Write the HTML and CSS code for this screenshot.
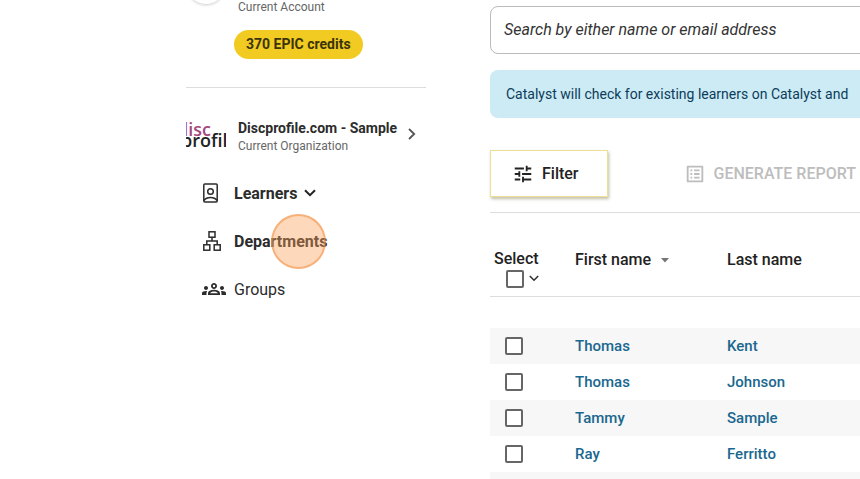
FILE: index.html
```html
<!DOCTYPE html>
<html lang="en">
  <head>
    <meta charset="utf-8" />
    <title>Learners</title>
    <meta name="viewport" content="width=device-width, initial-scale=1" />
    <link rel="stylesheet" href="styles.css">
  </head>
  <body>
    <aside class="sidebar">
      <div class="account">
        <div class="avatar"></div>
        <div class="caption">Current Account</div>
      </div>
      <div class="credits">370 EPIC credits</div>

      <a class="organization" href="#">
        <span class="logo"><span class="logo-top">disc</span><span class="logo-bottom">profile</span></span>
        <span class="org-text">
          <span class="org-name">Discprofile.com - Sample</span>
          <span class="caption">Current Organization</span>
        </span>
        <svg class="org-arrow" width="8" height="12" viewBox="0 0 8 12"><path d="M1 1l5.200 5L1 11" fill="none" stroke="#555" stroke-width="1.800" /></svg>
      </a>

      <nav class="menu">
        <a class="menu-item bold" href="#">
          <svg width="24" height="24" viewBox="0 0 24 24" fill="none" stroke="#2c2c2c" stroke-width="1.500">
            <rect x="2.800" y="3" width="13.400" height="18" rx="1" />
            <circle cx="9.500" cy="10.500" r="2.800" />
            <path d="M3 19.500c1.500-2.200 3.800-3 6.500-3s5 .8 6.500 3" />
          </svg>
          <span>Learners</span>
          <svg class="chevron" width="12" height="8" viewBox="0 0 12 8"><path d="M1 1.200l5 5 5-5" fill="none" stroke="#222" stroke-width="2" /></svg>
        </a>
        <a class="menu-item bold" href="#">
          <svg width="24" height="24" viewBox="0 0 24 24" fill="none" stroke="#2c2c2c" stroke-width="1.500">
            <rect x="8" y="2.800" width="6" height="5.400" />
            <rect x="2.800" y="15.800" width="6" height="5.400" />
            <rect x="13.200" y="15.800" width="6" height="5.400" />
            <path d="M11 8v4M5.800 15.500V12h10.400v3.500" />
          </svg>
          <span class="target">Departments</span>
        </a>
        <a class="menu-item" href="#">
          <svg width="24" height="24" viewBox="0 0 24 24" fill="#2c2c2c">
            <path d="M12 12.750c1.630 0 3.070.39 4.240.9 1.080.48 1.760 1.560 1.760 2.730V18H6v-1.610c0-1.180.68-2.260 1.760-2.730 1.170-.52 2.610-.91 4.240-.91zM4 13c1.100 0 2-.9 2-2s-.9-2-2-2-2 .9-2 2 .9 2 2 2zm1.130 1.100C4.760 14.040 4.390 14 4 14c-.99 0-1.930.21-2.780.58C.48 14.900 0 15.620 0 16.430V18h4.500v-1.610c0-.83.23-1.610.63-2.290zM20 13c1.100 0 2-.9 2-2s-.9-2-2-2-2 .9-2 2 .9 2 2 2zm4 3.430c0-.81-.48-1.530-1.220-1.850-.85-.37-1.790-.58-2.780-.58-.39 0-.76.04-1.130.1.400.68.63 1.460.63 2.290V18H24v-1.570zM12 6c1.660 0 3 1.340 3 3s-1.340 3-3 3-3-1.340-3-3 1.340-3 3-3z" />
            <path d="M8.100 16.200c.6-1 2-1.600 3.900-1.600s3.300.6 3.900 1.600z" fill="#fff" />
            <circle cx="12" cy="9" r="1.200" fill="#fff" />
          </svg>
          <span>Groups</span>
        </a>
      </nav>
    </aside>

    <main>
      <input class="search" type="text" aria-label="Search learners" placeholder="Search by either name or email address" />
      <div class="notice">Catalyst will check for existing learners on Catalyst and</div>

      <div class="toolbar">
        <button class="filter" type="button">
          <svg width="24" height="24" viewBox="0 0 24 24" fill="#222"><path d="M3 17v2h6v-2H3zM3 5v2h10V5H3zm10 16v-2h8v-2h-8v-2h-2v6h2zM7 9v2H3v2h4v2h2V9H7zm14 4v-2H11v2h10zm-6-4h2V7h4V5h-4V3h-2v6z" /></svg>
          Filter
        </button>
        <button class="report" type="button" disabled>
          <svg width="24" height="24" viewBox="0 0 24 24" fill="#bdbdbd"><path d="M19 5v14H5V5h14m1.100-2H3.900c-.5 0-.9.4-.9.9v16.200c0 .4.400.9.900.9h16.200c.4 0 .9-.5.9-.9V3.900c0-.5-.5-.9-.9-.9zM11 7h6v2h-6V7zm0 4h6v2h-6v-2zm0 4h6v2h-6zM7 7h2v2H7zm0 4h2v2H7zm0 4h2v2H7z" /></svg>
          GENERATE REPORT
        </button>
      </div>

      <table>
        <thead>
          <tr>
            <th class="col-select">
              <label for="select-all">Select</label>
              <span class="select-all">
                <input id="select-all" type="checkbox" />
                <svg width="10" height="7" viewBox="0 0 10 7"><path d="M.8 1l4.200 4.200L9.200 1" fill="none" stroke="#333" stroke-width="1.600" /></svg>
              </span>
            </th>
            <th class="col-first">First name <svg class="sort" width="8" height="5" viewBox="0 0 8 5"><path d="M0 0h8L4 4.500z" fill="#757575" /></svg></th>
            <th>Last name</th>
          </tr>
        </thead>
        <tbody>
          <tr>
            <td><input type="checkbox" aria-label="Select Thomas Kent" /></td>
            <td><a href="#">Thomas</a></td>
            <td><a href="#">Kent</a></td>
          </tr>
          <tr>
            <td><input type="checkbox" aria-label="Select Thomas Johnson" /></td>
            <td><a href="#">Thomas</a></td>
            <td><a href="#">Johnson</a></td>
          </tr>
          <tr>
            <td><input type="checkbox" aria-label="Select Tammy Sample" /></td>
            <td><a href="#">Tammy</a></td>
            <td><a href="#">Sample</a></td>
          </tr>
          <tr>
            <td><input type="checkbox" aria-label="Select Ray Ferritto" /></td>
            <td><a href="#">Ray</a></td>
            <td><a href="#">Ferritto</a></td>
          </tr>
          <tr>
            <td></td>
            <td></td>
            <td></td>
          </tr>
        </tbody>
      </table>
    </main>
  </body>
</html>
```

FILE: styles.css
```css
*,
*::after {
  box-sizing: border-box;
}

body {
  display: flex;
  gap: 64px;
  height: 100vh;
  margin: 0;
  padding-left: 186px;
  overflow: hidden;
  font-family: Roboto, sans-serif;
  font-size: 16px;
  color: #2c2c2c;
  background: #fff;
}

a {
  color: inherit;
  text-decoration: none;
}

.sidebar {
  flex: 0 0 240px;
}

.account {
  display: flex;
  align-items: flex-end;
  gap: 12px;
  height: 15px;
}

.avatar {
  width: 40px;
  height: 40px;
  margin-bottom: 10px;
  border: 1px solid #ddd;
  border-radius: 50%;
  box-shadow: 0 1px 2px rgba(0, 0, 0, 0.1);
}

.caption {
  font-size: 12px;
  line-height: 16px;
  color: #666;
}

.credits {
  width: fit-content;
  margin: 15px 0 0 48px;
  padding: 0 12px;
  border-radius: 16px;
  background: #f1cb22;
  font-size: 14px;
  font-weight: bold;
  line-height: 29px;
  color: #3c3409;
}

.organization {
  display: flex;
  align-items: center;
  margin-top: 28px;
  padding-top: 26px;
  border-top: 1px solid #ddd;
}

.logo {
  display: flex;
  flex-direction: column;
  width: 40px;
  height: 40px;
  padding-top: 10px;
  overflow: hidden;
  font-family: "Open Sans", sans-serif;
  font-size: 18px;
  font-weight: 600;
  line-height: 11px;
}

.logo-top {
  margin-left: -9px;
  color: #a5477c;
}

.logo-bottom {
  margin-left: -5px;
  color: #222;
}

.org-text {
  display: flex;
  flex-direction: column;
  margin-left: 12px;
  padding-top: 4px;
}

.org-name {
  font-size: 14px;
  font-weight: bold;
  line-height: 20px;
  white-space: nowrap;
}

.org-arrow {
  margin-left: 11px;
}

.menu {
  margin-top: 15px;
}

.menu-item {
  display: flex;
  align-items: center;
  gap: 8px;
  height: 48px;
  padding-left: 16px;
}

.menu-item svg {
  margin-left: -1px;
  margin-right: 1px;
}

.menu-item:last-child svg {
  margin: 0;
}

.bold {
  font-weight: bold;
}

.target {
  position: relative;
}

/* click highlight */
.target::after {
  content: "";
  position: absolute;
  top: -18px;
  left: 37px;
  width: 55px;
  height: 55px;
  border: 2px solid rgba(240, 140, 60, 0.5);
  border-radius: 50%;
  background: rgba(249, 157, 85, 0.4);
}

main {
  flex: 1;
  min-width: 0;
}

.search {
  display: block;
  width: calc(100% + 16px);
  height: 48px;
  margin-top: 6px;
  padding: 0 13px 2px;
  border: 1px solid #bbb;
  border-radius: 8px;
  font: italic 16px Roboto, sans-serif;
}

.search::placeholder {
  color: #333;
}

.notice {
  margin: 16px -16px 0 0;
  padding: 0 16px;
  border-radius: 8px;
  background: #cdebf5;
  font-size: 14px;
  line-height: 48px;
  color: #0b3c5a;
  white-space: nowrap;
}

.toolbar {
  display: flex;
  gap: 76px;
  padding: 32px 0 15px;
  border-bottom: 1px solid #ddd;
}

button {
  display: flex;
  align-items: center;
  gap: 8px;
  height: 47px;
  padding: 0;
  border: none;
  background: none;
  font: 500 16px Roboto, sans-serif;
  color: #222;
  white-space: nowrap;
}

svg {
  flex: none;
}

button svg {
  width: 22px;
  height: 22px;
}

.filter {
  padding: 0 28px 0 21px;
  border: 1px solid #eedf98;
  box-shadow: 1px 2px 3px rgba(80, 70, 0, 0.35);
}

.report {
  color: #bdbdbd;
}

table {
  width: 100%;
  border-collapse: collapse;
}

th,
td {
  padding: 0;
  text-align: left;
}

th {
  height: 83px;
  padding-top: 10px;
  border-bottom: 1px solid #ddd;
  font-weight: 500;
  color: #222;
}

th.col-select {
  padding-top: 28px;
}

th label {
  display: block;
  margin-left: 4px;
}

.select-all {
  display: flex;
  align-items: center;
  gap: 5px;
  margin: 2px 0 0 16px;
}

.sort {
  margin-left: 6px;
  vertical-align: middle;
}

.col-select {
  width: 85px;
}

.col-first {
  width: 152px;
}

/* space between the header line and the first row */
tbody::before {
  content: "";
  display: block;
  height: 31px;
}

tbody tr {
  height: 36px;
}

tbody tr:nth-child(odd) {
  background: #f7f7f7;
}

td {
  font-size: 15px;
  font-weight: 500;
  color: #1a678f;
}

input[type="checkbox"] {
  display: block;
  appearance: none;
  width: 18px;
  height: 18px;
  margin: 0;
  border: 2px solid #666;
  border-radius: 2px;
  background: #fff;
}

td input[type="checkbox"] {
  margin-left: 15px;
}
```
